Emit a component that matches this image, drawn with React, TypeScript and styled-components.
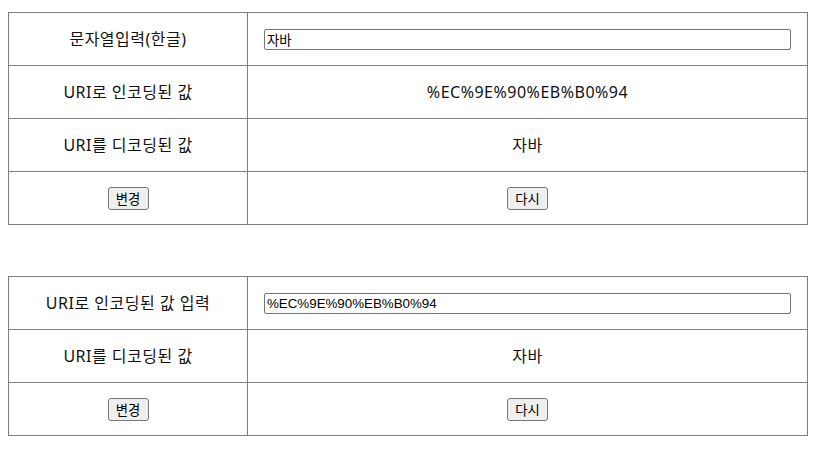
import React, { useState } from "react";
import styled, { createGlobalStyle } from "styled-components";

const GlobalStyle = createGlobalStyle`
  body {
    margin: 8px;
    background: #ffffff;
    font-family: "Noto Sans", "Noto Sans CJK KR", sans-serif;
    color: #000000;
  }
`;

const Page = styled.div`
  display: flex;
  flex-direction: column;
  gap: 51px;
  padding-top: 4px;
`;

const Table = styled.table`
  width: 800px;
  border-collapse: collapse;
  border: 1px solid #808080;
  table-layout: fixed;
`;

const Row = styled.tr`
  height: 53px;
`;

const Cell = styled.td<{ $label?: boolean }>`
  box-sizing: border-box;
  width: ${(p) => (p.$label ? "239px" : "auto")};
  border: 1px solid #808080;
  padding: 0 16px;
  text-align: center;
  vertical-align: middle;
  font-size: 16px;
  line-height: 21px;
  letter-spacing: 0.5px;
  color: #111111;
`;

const TextInput = styled.input`
  display: block;
  width: 100%;
  height: 21px;
  box-sizing: border-box;
  margin: 0;
  padding: 1px 2px;
  border: 1px solid #767676;
  border-radius: 2px;
  font-family: "Liberation Sans", "Noto Sans CJK KR", sans-serif;
  font-size: 13.33px;
  letter-spacing: 0;
  color: #000000;
  background: #ffffff;
`;

const Button = styled.button`
  box-sizing: border-box;
  height: 23px;
  min-width: 41px;
  padding: 1px 7px;
  border: 1px solid #767676;
  border-radius: 3px;
  background: #efefef;
  font-family: "Liberation Sans", "Noto Sans CJK KR", sans-serif;
  font-size: 13.33px;
  letter-spacing: 0;
  color: #000000;
  vertical-align: middle;
`;

const App: React.FC = () => {
  const [text, setText] = useState("자바");
  const [encodedInput, setEncodedInput] = useState("%EC%9E%90%EB%B0%94");

  const encoded = encodeURI(text);
  let decoded = "";
  try {
    decoded = decodeURI(encodedInput);
  } catch {
    decoded = "";
  }

  return (
    <>
      <GlobalStyle />
      <Page>
        <Table>
          <tbody>
            <Row>
              <Cell $label>문자열입력(한글)</Cell>
              <Cell>
                <TextInput value={text} onChange={(e) => setText(e.target.value)} />
              </Cell>
            </Row>
            <Row>
              <Cell $label>URI로 인코딩된 값</Cell>
              <Cell>{encoded}</Cell>
            </Row>
            <Row>
              <Cell $label>URI를 디코딩된 값</Cell>
              <Cell>{decodeURI(encoded)}</Cell>
            </Row>
            <Row>
              <Cell $label>
                <Button>변경</Button>
              </Cell>
              <Cell>
                <Button onClick={() => setText("")}>다시</Button>
              </Cell>
            </Row>
          </tbody>
        </Table>

        <Table>
          <tbody>
            <Row>
              <Cell $label>URI로 인코딩된 값 입력</Cell>
              <Cell>
                <TextInput
                  value={encodedInput}
                  onChange={(e) => setEncodedInput(e.target.value)}
                />
              </Cell>
            </Row>
            <Row>
              <Cell $label>URI를 디코딩된 값</Cell>
              <Cell>{decoded}</Cell>
            </Row>
            <Row>
              <Cell $label>
                <Button>변경</Button>
              </Cell>
              <Cell>
                <Button onClick={() => setEncodedInput("")}>다시</Button>
              </Cell>
            </Row>
          </tbody>
        </Table>
      </Page>
    </>
  );
};

export default App;
